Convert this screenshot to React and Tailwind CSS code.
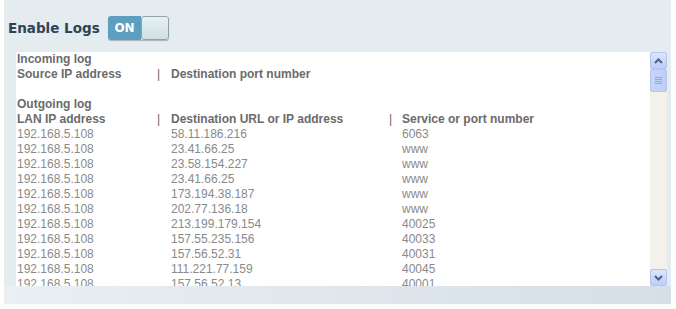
import React from "react";

const rows = [
  ["192.168.5.108", "58.11.186.216", "6063"],
  ["192.168.5.108", "23.41.66.25", "www"],
  ["192.168.5.108", "23.58.154.227", "www"],
  ["192.168.5.108", "23.41.66.25", "www"],
  ["192.168.5.108", "173.194.38.187", "www"],
  ["192.168.5.108", "202.77.136.18", "www"],
  ["192.168.5.108", "213.199.179.154", "40025"],
  ["192.168.5.108", "157.55.235.156", "40033"],
  ["192.168.5.108", "157.56.52.31", "40031"],
  ["192.168.5.108", "111.221.77.159", "40045"],
  ["192.168.5.108", "157.56.52.13", "40001"],
];

const Arrow = ({ down }) => (
  <svg width="9" height="6" viewBox="0 0 9 6" className={down ? "rotate-180" : ""}>
    <path d="M1 5 L4.5 1.5 L8 5" fill="none" stroke="#4d6185" strokeWidth="2" />
  </svg>
);

const ScrollBar = () => (
  <div className="w-[17px] flex flex-col bg-[#f3f1ea]">
    <div className="h-[17px] flex items-center justify-center rounded-[2px] border border-[#b4c6f0] bg-gradient-to-b from-[#dbe5fd] to-[#bccdf8]">
      <Arrow />
    </div>
    <div className="h-[23px] flex flex-col items-center justify-center gap-[1px] rounded-[2px] border border-[#b4c6f0] bg-gradient-to-r from-[#c8d6fb] to-[#bccdf8]">
      <span className="block w-[7px] h-px bg-[#8ea6e4]" />
      <span className="block w-[7px] h-px bg-[#8ea6e4]" />
      <span className="block w-[7px] h-px bg-[#8ea6e4]" />
      <span className="block w-[7px] h-px bg-[#8ea6e4]" />
    </div>
    <div className="flex-1" />
    <div className="h-[17px] flex items-center justify-center rounded-[2px] border border-[#b4c6f0] bg-gradient-to-b from-[#dbe5fd] to-[#bccdf8]">
      <Arrow down />
    </div>
  </div>
);

const Head = ({ cols }) => (
  <div className="flex font-bold text-[#6b6b6b]">
    <span className="w-[140px]">{cols[0]}</span>
    <span className="w-[14px] font-normal">|</span>
    <span className="w-[218px]">{cols[1]}</span>
    {cols[2] && (
      <>
        <span className="w-[13px] font-normal">|</span>
        <span>{cols[2]}</span>
      </>
    )}
  </div>
);

export default function App() {
  return (
    <div className="w-[676px] h-[309px] bg-white pl-[4px] pr-[5px] font-['Liberation_Sans',Arial,sans-serif]">
      <div className="h-[304px] bg-[#e4ecf0] flex flex-col">
        <div className="h-[52px] flex items-center pl-[4px] pt-[4px]">
          <span className="w-[100px] text-[13.5px] font-bold text-[#2f4456] font-['DejaVu_Sans',sans-serif]">Enable Logs</span>
          <div className="flex h-[24px] w-[61px] rounded-[3px] overflow-hidden shadow-[0_1px_1px_rgba(0,0,0,0.25)]">
            <div className="w-[33px] bg-[#5d9fc0] text-white text-[12px] font-bold flex items-center justify-center font-['DejaVu_Sans',sans-serif]">ON</div>
            <div className="flex-1 rounded-[3px] border border-[#8ea3ae] bg-gradient-to-b from-[#e7f0f2] to-[#cfdfe3]" />
          </div>
        </div>
        <div className="flex h-[234px] ml-[12px] mr-[4px]">
          <div className="flex-1 bg-white overflow-hidden pl-[1px] text-[12px] leading-[15px]">
            <div className="font-bold text-[#6b6b6b]">Incoming log</div>
            <Head cols={["Source IP address", "Destination port number"]} />
            <div className="h-[15px]" />
            <div className="font-bold text-[#6b6b6b]">Outgoing log</div>
            <Head cols={["LAN IP address", "Destination URL or IP address", "Service or port number"]} />
            {rows.map((r, i) => (
              <div key={i} className="flex text-[#8a8a8a]">
                <span className="w-[154px]">{r[0]}</span>
                <span className="w-[231px]">{r[1]}</span>
                <span>{r[2]}</span>
              </div>
            ))}
          </div>
          <ScrollBar />
        </div>
        <div className="flex-1 bg-gradient-to-r from-[#e9eff3] to-[#d6dfe7]" />
      </div>
    </div>
  );
}
